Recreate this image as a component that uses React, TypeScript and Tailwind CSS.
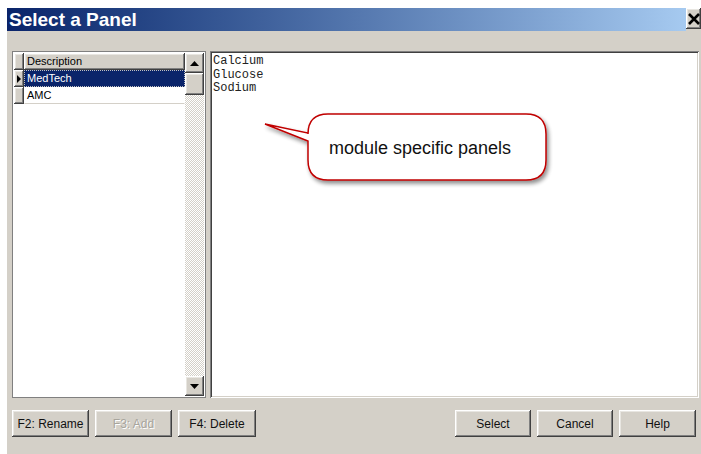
import React from 'react';

const bevel =
  'shadow-[inset_-1px_-1px_#404040,inset_1px_1px_#ffffff,inset_-2px_-2px_#808080,inset_2px_2px_#e8e6e1]';
const sunken =
  'shadow-[inset_1px_1px_#808080,inset_-1px_-1px_#ffffff,inset_2px_2px_#404040,inset_-2px_-2px_#d4d0c8]';

const rows = [
  { id: 1, name: 'MedTech', current: true },
  { id: 2, name: 'AMC', current: false },
];

const items = ['Calcium', 'Glucose', 'Sodium'];

const Button: React.FC<{ label: string; width: string; disabled?: boolean }> = ({ label, width, disabled }) => (
  <button
    className={`h-[27px] ${width} bg-[#d4d0c8] text-[12px] ${bevel} ${
      disabled ? 'text-[#a8a59d] [text-shadow:1px_1px_#ffffff]' : 'text-[#111]'
    }`}
  >
    {label}
  </button>
);

const Arrow: React.FC<{ up?: boolean }> = ({ up }) => (
  <div className={`h-[20px] w-full bg-[#d4d0c8] flex items-center justify-center ${bevel}`}>
    <svg width="9" height="5" viewBox="0 0 9 5">
      {up ? <path d="M0 5 L4.5 0 L9 5 Z" fill="#000" /> : <path d="M0 0 L9 0 L4.5 5 Z" fill="#000" />}
    </svg>
  </div>
);

const PanelGrid: React.FC = () => (
  <div className="w-[194px] h-full bg-white flex p-[1px] border border-[#808080]">
    <div className="flex-1 flex flex-col">
      <div className="flex h-[17px] bg-[#d4d0c8]">
        <div className={`w-[10px] ${bevel}`} />
        <div className={`flex-1 pl-[3px] leading-[17px] ${bevel}`}>Description</div>
      </div>
      {rows.map((row) => (
        <div key={row.id} className="flex h-[17px]">
          <div className={`w-[10px] bg-[#d4d0c8] flex items-center justify-center ${bevel}`}>
            {row.current && (
              <svg width="4" height="8" viewBox="0 0 4 8">
                <path d="M0 0 L4 4 L0 8 Z" fill="#000" />
              </svg>
            )}
          </div>
          <div
            className={`flex-1 pl-[2px] leading-[15px] border ${
              row.current
                ? 'bg-[#0a246a] text-white border-dotted border-[#c0c0c0]'
                : 'border-transparent border-b-[#d4d0c8]'
            }`}
          >
            {row.name}
          </div>
        </div>
      ))}
    </div>
    <div className="w-[19px] flex flex-col">
      <Arrow up />
      <div className={`h-[22px] bg-[#d4d0c8] ${bevel}`} />
      <div className="flex-1 bg-[repeating-conic-gradient(#d4d0c8_0_25%,#ffffff_0_50%)] bg-[length:2px_2px]" />
      <Arrow />
    </div>
  </div>
);

// speech bubble pointing at the list of panels
const Callout: React.FC = () => (
  <div className="absolute left-[247px] top-[80px] w-[300px] h-[80px]">
    <svg width="300" height="80" viewBox="0 0 300 80" className="absolute inset-0">
      <defs>
        <filter id="drop" x="-10%" y="-20%" width="130%" height="150%">
          <feGaussianBlur in="SourceAlpha" stdDeviation="2" />
          <feOffset dx="2" dy="3" />
          <feComponentTransfer>
            <feFuncA type="linear" slope="0.45" />
          </feComponentTransfer>
          <feMerge>
            <feMergeNode />
            <feMergeNode in="SourceGraphic" />
          </feMerge>
        </filter>
      </defs>
      <path
        d="M74 3 H272 Q292 3 292 23 V49 Q292 69 272 69 H74 Q54 69 54 49 V30 L11 13 L54 22 V23 Q54 3 74 3 Z"
        fill="#ffffff"
        stroke="#c00000"
        strokeWidth="1.5"
        filter="url(#drop)"
      />
    </svg>
    <div className="absolute left-[75px] top-[57px] -translate-y-full pb-[9px] text-[18px] leading-[22px] text-[#111] font-['Liberation_Sans',Arial,sans-serif]">
      module specific panels
    </div>
  </div>
);

export default function App() {
  return (
    <div className="w-[701px] h-[454px] bg-white pl-[7px] pt-[8px] font-['Liberation_Sans',Arial,sans-serif] text-[11px] overflow-hidden">
      <div className="w-[694px] h-[446px] flex flex-col bg-[#d4d0c8]">
        <div className="h-[23px] flex">
          <div className="flex-1 bg-gradient-to-r from-[#0a246a] to-[#a6caf0] text-white font-bold text-[19px] leading-[23px] pl-[2px]">
            Select a Panel
          </div>
          <div className={`w-[15px] h-[21px] bg-[#d4d0c8] flex items-center justify-center ${bevel}`}>
            <svg width="12" height="12" viewBox="0 0 12 12">
              <path d="M1 1 L11 11 M11 1 L1 11" stroke="#000" strokeWidth="2.6" />
            </svg>
          </div>
        </div>

        <div className="relative flex-1 flex flex-col pl-[5px] pr-[2px] pt-[20px]">
          <div className="flex h-[347px] gap-[4px]">
            <PanelGrid />
            <div className={`flex-1 bg-white px-[3px] pt-[4px] ${sunken}`}>
              {items.map((item) => (
                <div key={item} className="font-['Liberation_Mono','Courier_New',monospace] text-[12px] leading-[13.5px] text-[#222]">
                  {item}
                </div>
              ))}
            </div>
          </div>

          <div className="flex mt-[12px] pr-[3px]">
            <div className="flex gap-[6px]">
              <Button label="F2: Rename" width="w-[77px]" />
              <Button label="F3: Add" width="w-[77px]" disabled />
              <Button label="F4: Delete" width="w-[78px]" />
            </div>
            <div className="flex gap-[6px] ml-auto">
              <Button label="Select" width="w-[76px]" />
              <Button label="Cancel" width="w-[76px]" />
              <Button label="Help" width="w-[77px]" />
            </div>
          </div>

          <Callout />
        </div>
      </div>
    </div>
  );
}
